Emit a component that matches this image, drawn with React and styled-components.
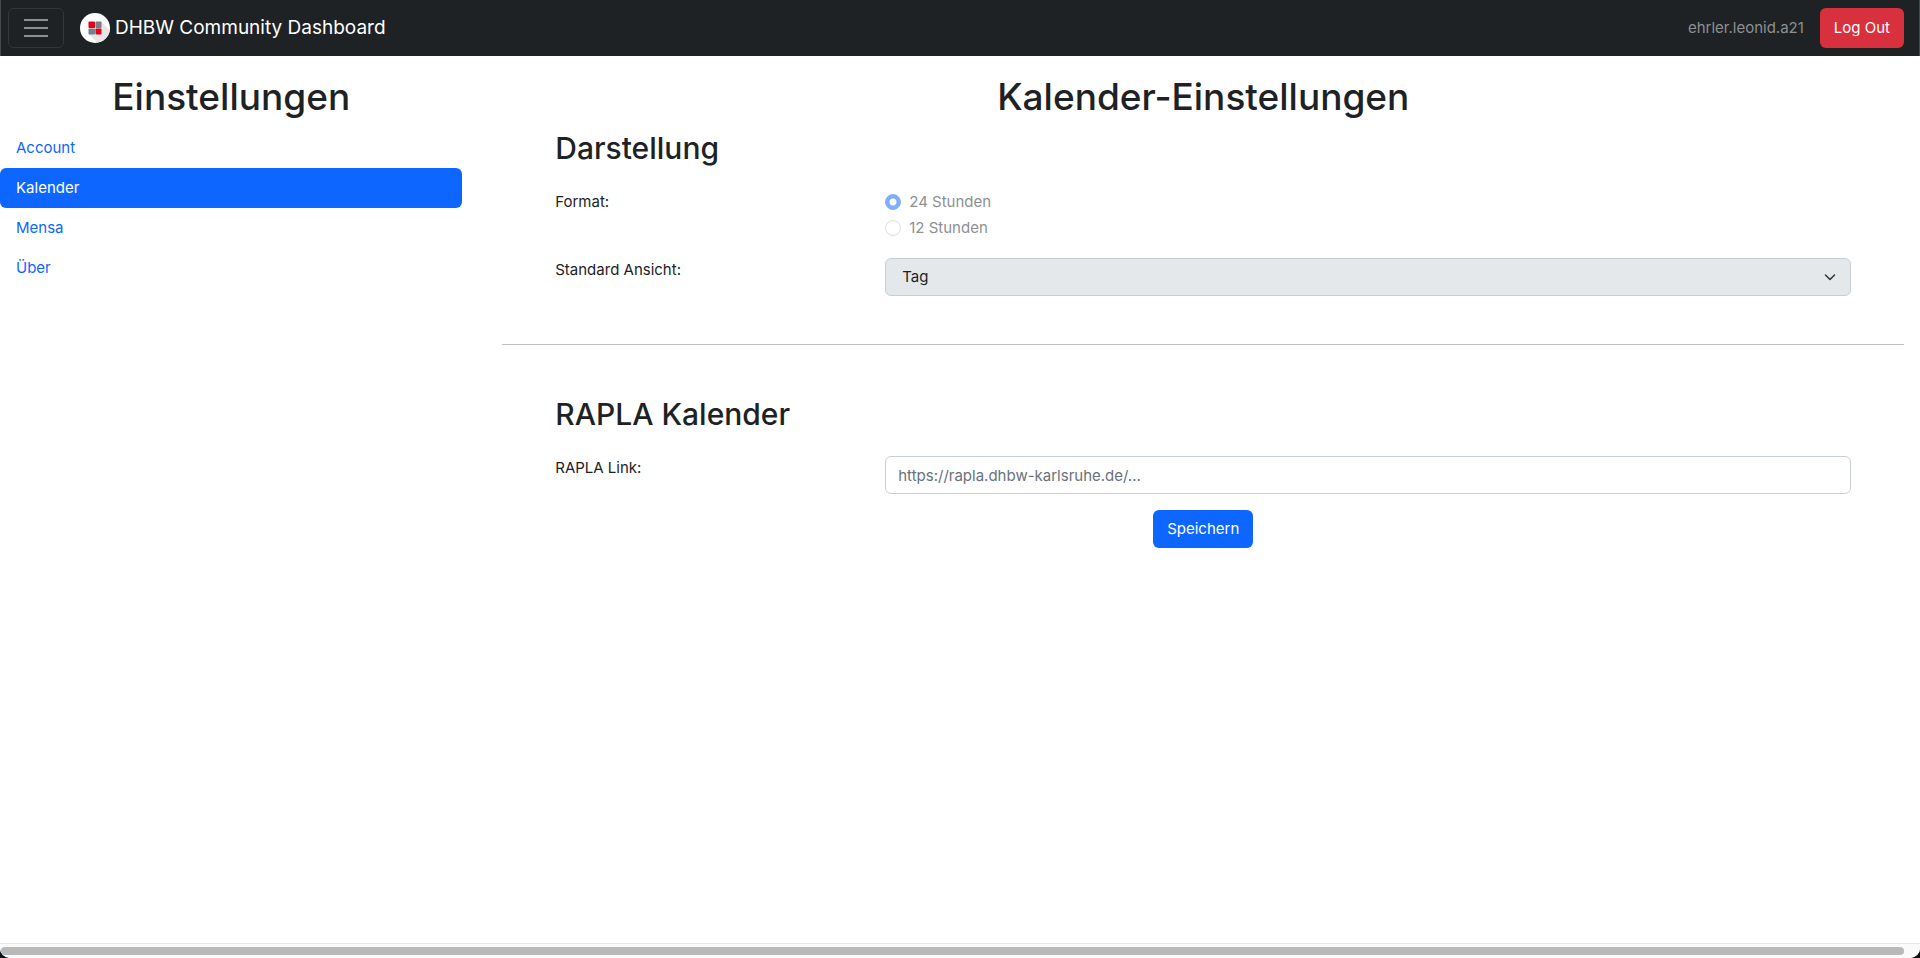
import React from "react";
import styled, { createGlobalStyle } from "styled-components";

const GlobalStyle = createGlobalStyle`
  *, *::before, *::after { box-sizing: border-box; }
  html { background: #0b1014; }
  body {
    margin: 0;
    font-family: Inter, "Liberation Sans", sans-serif;
    font-size: 15px;
    line-height: 24px;
    color: #1e2225;
  }
  button, input, select { font: inherit; }
`;

const Page = styled.div`
  display: flex;
  flex-direction: column;
  min-height: 100vh;
  background: #fff;
  border-radius: 0 0 10px 10px;
  overflow: hidden;
`;

const Navbar = styled.header`
  display: flex;
  align-items: center;
  height: 56px;
  padding: 0 15px 0 7px;
  background: #1e2225;
  border: solid #46494c;
  border-width: 0 1px;
`;

const Toggler = styled.button`
  display: flex;
  align-items: center;
  justify-content: center;
  width: 56px;
  height: 40px;
  padding: 0;
  background: transparent;
  border: 1px solid #33373a;
  border-radius: 6px;
`;

const Brand = styled.a`
  display: flex;
  align-items: center;
  gap: 5px;
  margin: 0 auto 0 16px;
  font-size: 19px;
  line-height: 30px;
  color: #fff;
  text-decoration: none;
`;

const UserName = styled.span`
  margin-right: 16px;
  color: #8d9092;
`;

const Button = styled.button`
  height: ${(p) => (p.$danger ? 40 : 38)}px;
  padding: 0 14px;
  color: #fff;
  background: ${(p) => (p.$danger ? "#d9303e" : "#0d66ff")};
  border: 0;
  border-radius: 6px;
`;

const Columns = styled.div`
  display: grid;
  grid-template-columns: minmax(0, 33fr) minmax(0, 100fr);
  column-gap: 40px;
  flex: 1;
  padding: 16px 16px 48px 0;
`;

const Title = styled.h1`
  margin: 0;
  padding-bottom: 6px;
  font-size: 37px;
  line-height: 50px;
  font-weight: 500;
  text-align: center;
`;

const NavLink = styled.a`
  display: block;
  padding: 8px 16px;
  border-radius: 6px;
  color: ${(p) => (p.$active ? "#fff" : "#0d66ff")};
  background: ${(p) => (p.$active ? "#0d66ff" : "transparent")};
  text-decoration: none;
`;

const Section = styled.section`
  max-width: 1320px;
  margin: 0 auto;
  padding: 0 12px;
`;

const SectionTitle = styled.h2`
  margin: 0;
  padding-bottom: 22px;
  font-size: 30px;
  line-height: 40px;
  font-weight: 500;
`;

const Row = styled.div`
  display: grid;
  grid-template-columns: minmax(0, 1fr) minmax(0, 3fr);
  column-gap: 8px;
  margin-bottom: ${(p) => (p.$last ? 0 : 16)}px;
`;

const Label = styled.label`
  justify-self: start;
`;

const RadioLabel = styled.label`
  display: flex;
  align-items: center;
  gap: 8px;
  width: max-content;
  margin-bottom: 2px;
  color: #8e9092;
`;

const Radio = styled.input`
  appearance: none;
  width: 16px;
  height: 16px;
  margin: 0;
  background: #fff;
  border: 1px solid #dcdddf;
  border-radius: 50%;

  &:checked {
    background: radial-gradient(circle, #fff 3px, #80adff 4px);
    border-color: #80adff;
  }
`;

const SelectBox = styled.div`
  display: grid;
  align-items: center;

  & > * { grid-area: 1 / 1; }
`;

const Select = styled.select`
  appearance: none;
  width: 100%;
  height: 38px;
  padding: 0 36px 0 16px;
  color: #1e2225;
  opacity: 1;
  background: #e4e8eb;
  border: 1px solid #c8ced5;
  border-radius: 6px;
`;

const Chevron = styled.svg`
  justify-self: end;
  margin-right: 13px;
  pointer-events: none;
`;

const TextInput = styled.input`
  width: 100%;
  height: 38px;
  padding: 0 12px;
  color: #1e2225;
  background: #fff;
  border: 1px solid #c8ced5;
  border-radius: 6px;

  &::placeholder { color: #69727a; opacity: 1; }
`;

const Divider = styled.hr`
  height: 1px;
  margin: 48px 0 49px;
  background: #bcbdbe;
  border: 0;
`;

const Actions = styled.div`
  display: flex;
  justify-content: center;
  margin-top: 16px;
`;

const ScrollTrack = styled.div`
  height: 15px;
  padding: 3px 16px 3px 1px;
  background: #fafafa;
  border-top: 1px solid #e6e6e6;
`;

const ScrollThumb = styled.div`
  height: 8px;
  background: #b9b9b9;
  border-radius: 4px;
`;

const Logo = () => (
  <svg width="30" height="30" viewBox="0 0 30 30" aria-hidden="true">
    <defs>
      <clipPath id="disc">
        <circle cx="15" cy="15" r="15" />
      </clipPath>
    </defs>
    <circle cx="15" cy="15" r="15" fill="#fff" />
    <path d="M21.5 9 L35 22.5 V35 H22.5 L9 21.5 Z" fill="#e6e6e6" clipPath="url(#disc)" />
    <rect x="8.5" y="8.5" width="6.5" height="6.5" rx="0.8" fill="#e2001a" />
    <rect x="15.5" y="8.5" width="6" height="6.5" rx="0.8" fill="#757f88" />
    <rect x="8.5" y="15.5" width="6.5" height="6" rx="0.8" fill="#757f88" />
    <rect x="15.5" y="15.5" width="6" height="6" rx="0.8" fill="#e2001a" />
  </svg>
);

const links = ["Account", "Kalender", "Mensa", "Über"];

export default function App() {
  return (
    <Page>
      <GlobalStyle />
      <Navbar>
        <Toggler type="button" aria-label="Menü">
          <svg width="30" height="30" viewBox="0 0 30 30" fill="none">
            <path d="M3 7h24M3 15h24M3 23h24" stroke="#8d9092" strokeWidth="2" />
          </svg>
        </Toggler>
        <Brand href="#">
          <Logo />
          DHBW Community Dashboard
        </Brand>
        <UserName>ehrler.leonid.a21</UserName>
        <Button type="button" $danger>Log Out</Button>
      </Navbar>

      <Columns>
        <nav>
          <Title>Einstellungen</Title>
          {links.map((name) => (
            <NavLink key={name} href={`#${name}`} $active={name === "Kalender"}>
              {name}
            </NavLink>
          ))}
        </nav>

        <main>
          <Title>Kalender-Einstellungen</Title>
          <Section>
            <SectionTitle>Darstellung</SectionTitle>
            <Row>
              <Label as="span" id="format">Format:</Label>
              <div role="radiogroup" aria-labelledby="format">
                <RadioLabel>
                  <Radio type="radio" name="format" defaultChecked disabled />
                  24 Stunden
                </RadioLabel>
                <RadioLabel>
                  <Radio type="radio" name="format" disabled />
                  12 Stunden
                </RadioLabel>
              </div>
            </Row>
            <Row $last>
              <Label htmlFor="view">Standard Ansicht:</Label>
              <SelectBox>
                <Select id="view" disabled defaultValue="Tag">
                  <option>Tag</option>
                </Select>
                <Chevron width="16" height="16" viewBox="0 0 16 16" fill="none" aria-hidden="true">
                  <path d="m3.5 6 4.5 4.5 4.5-4.5" stroke="#343a40" strokeWidth="1.6" strokeLinecap="round" strokeLinejoin="round" />
                </Chevron>
              </SelectBox>
            </Row>
          </Section>
          <Divider />
          <Section>
            <SectionTitle>RAPLA Kalender</SectionTitle>
            <Row $last>
              <Label htmlFor="rapla">RAPLA Link:</Label>
              <TextInput id="rapla" type="url" placeholder="https://rapla.dhbw-karlsruhe.de/..." />
            </Row>
            <Actions>
              <Button type="submit">Speichern</Button>
            </Actions>
          </Section>
        </main>
      </Columns>

      <ScrollTrack aria-hidden="true">
        <ScrollThumb />
      </ScrollTrack>
    </Page>
  );
}
